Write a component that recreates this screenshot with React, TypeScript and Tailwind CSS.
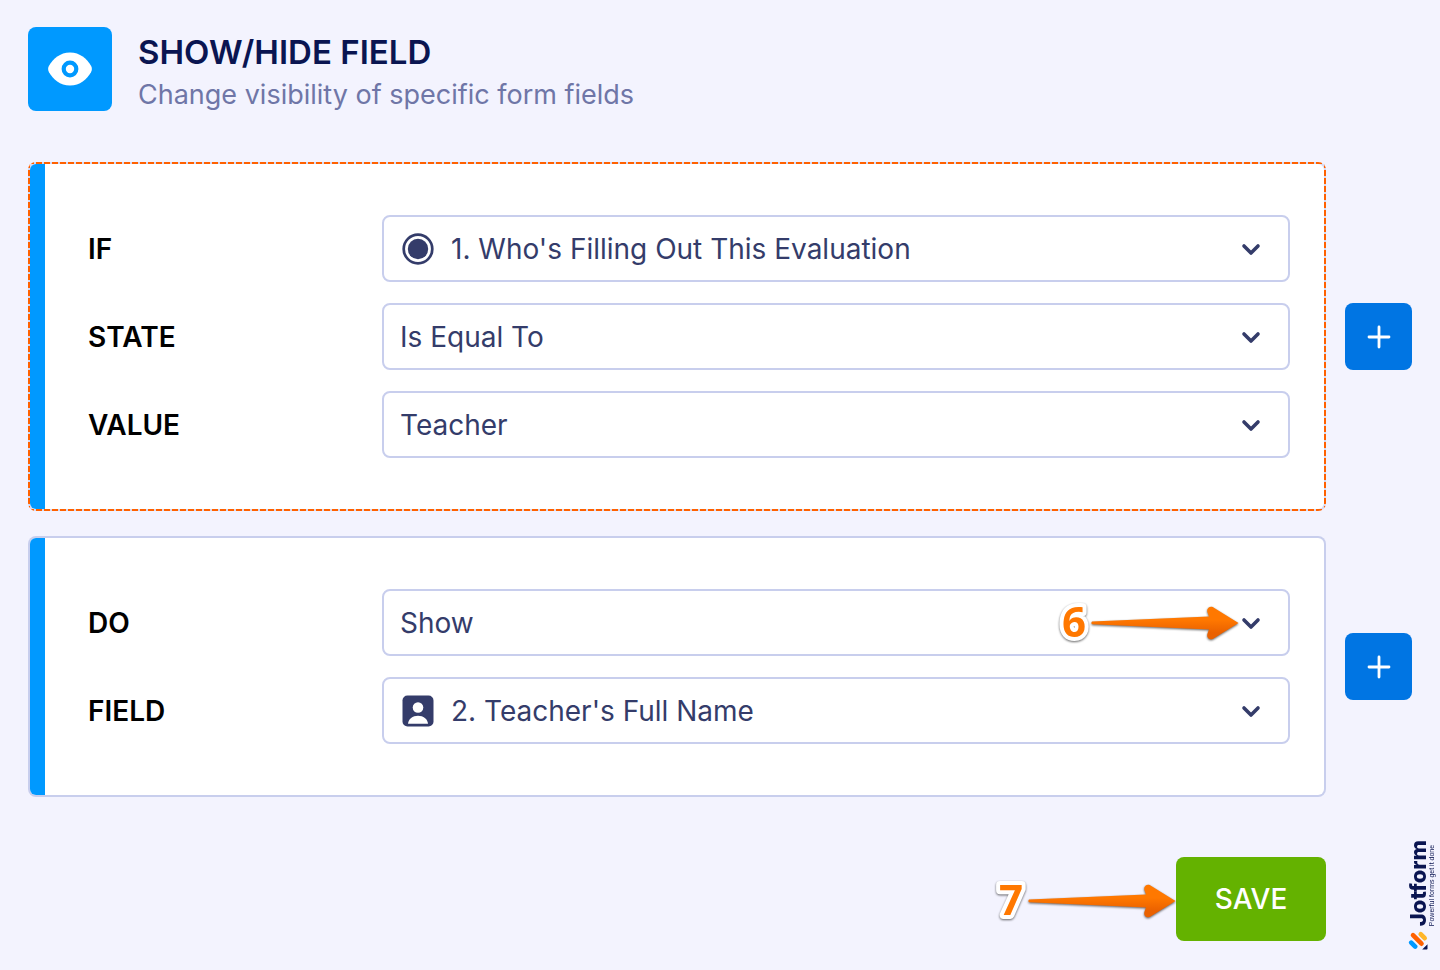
import React from "react";

interface FieldRowProps {
	id: string;
	label: string;
	value: string;
	icon?: React.ReactNode;
	children?: React.ReactNode;
}

interface StepArrowProps {
	step: number;
}

const EyeIcon = () => (
	<svg className="w-11 h-9" viewBox="0 0 44 36" aria-hidden="true">
		<path
			d="M22 1.500C12 1.500 5 8 1 14.800c-1.200 2.100-1.200 4.300 0 6.400C5 28 12 34.500 22 34.500s17-6.500 21-13.300c1.200-2.100 1.200-4.300 0-6.400C39 8 32 1.500 22 1.500Z"
			fill="#fff"
		/>
		<circle cx="22" cy="18" r="6.300" fill="#fff" stroke="#09f" strokeWidth="4.200" />
	</svg>
);

const RadioIcon = () => (
	<svg className="w-8 h-8" viewBox="0 0 32 32" aria-hidden="true">
		<circle cx="16" cy="16" r="14.300" fill="none" stroke="#343c6a" strokeWidth="2.700" />
		<circle cx="16" cy="16" r="10.200" fill="#343c6a" />
	</svg>
);

const PersonIcon = () => (
	<svg className="w-8 h-8" viewBox="0 0 32 32" aria-hidden="true">
		<rect x="0.500" y="0.500" width="31" height="31" rx="5" fill="#343c6a" />
		<circle cx="16" cy="12.500" r="5.300" fill="#fff" />
		<path d="M6 28.700c.5-4.800 4.600-7.900 10-7.900s9.500 3.100 10 7.900Z" fill="#fff" />
	</svg>
);

const ChevronIcon = () => (
	<svg
		className="pointer-events-none absolute right-[27px] top-1/2 -translate-y-1/2 w-6 h-6"
		viewBox="0 0 24 24"
		fill="none"
		stroke="#343c6a"
		strokeWidth="3.600"
		strokeLinecap="round"
		strokeLinejoin="round"
		aria-hidden="true"
	>
		<path d="M5 9l7 7 7-7" />
	</svg>
);

const StepArrow: React.FC<StepArrowProps> = ({ step }) => (
	<svg className="block w-[184px] h-16 drop-shadow-[0_1px_1px_rgba(0,0,0,0.6)]" viewBox="0 0 184 64">
		<defs>
			<linearGradient id={`arrow-${step}`} x1="0" y1="0" x2="0" y2="1">
				<stop offset="0.400" stopColor="#ff7800" />
				<stop offset="0.800" stopColor="#ea6100" />
			</linearGradient>
		</defs>
		<text
			x="7"
			y="46"
			className="font-['Open_Sans',sans-serif] text-[42px] font-bold"
			fill="#ff7800"
			stroke="#fff"
			strokeWidth="8"
			strokeLinejoin="round"
			paintOrder="stroke"
		>
			{step}
		</text>
		<path
			transform="translate(36 14)"
			d="M1 16.500 118 11.500l-1.300-3.500c-1.700-4 1.300-7.500 5-6L147.500 18l-25.800 16c-3.700 1.500-6.700-2-5-6l1.300-3.500L1 19.300Q-.5 18 1 16.500Z"
			fill={`url(#arrow-${step})`}
		/>
	</svg>
);

const FieldRow: React.FC<FieldRowProps> = ({ id, label, value, icon, children }) => (
	<div className="flex items-center">
		<label htmlFor={id} className="w-[294px] shrink-0 text-[28px] leading-9 font-semibold text-black">
			{label}
		</label>
		<div className="relative flex-1 min-w-0">
			{icon && (
				<span className="pointer-events-none absolute left-5 top-1/2 -translate-y-1/2">{icon}</span>
			)}
			<select
				id={id}
				defaultValue={value}
				className={`block w-full h-[67px] appearance-none rounded-lg border-2 border-[#c8ceed] bg-white pr-16 text-[28px] leading-9 text-[#343c6a] ${
					icon ? "pl-[67px]" : "pl-4"
				}`}
			>
				<option>{value}</option>
			</select>
			<ChevronIcon />
			{children}
		</div>
	</div>
);

const AddButton = ({ label }: { label: string }) => (
	<button
		type="button"
		aria-label={label}
		className="flex h-[67px] w-[67px] shrink-0 items-center justify-center rounded-lg bg-[#0075e3]"
	>
		<svg className="w-6 h-6" viewBox="0 0 24 24" stroke="#fff" strokeWidth="2.800" strokeLinecap="round" aria-hidden="true">
			<path d="M12 2v20M2 12h20" />
		</svg>
	</button>
);

// The selected card gets an orange dashed frame, the others a plain one
const RuleCard = ({ active = false, children }: { active?: boolean; children: React.ReactNode }) => (
	<div
		className={`flex-1 min-w-0 rounded-lg p-[2px] ${
			active
				? "bg-[#d5d9f2] [background-image:linear-gradient(90deg,#ff6100_75%,transparent_0),linear-gradient(90deg,#ff6100_75%,transparent_0),linear-gradient(#ff6100_75%,transparent_0),linear-gradient(#ff6100_75%,transparent_0)] [background-size:8px_2px,8px_2px,2px_8px,2px_8px] [background-position:left_top,left_bottom,left_top,right_top] [background-repeat:repeat-x,repeat-x,repeat-y,repeat-y]"
				: "bg-[#c8ceed]"
		}`}
	>
		<div className="flex overflow-hidden rounded-md bg-white">
			<div className="w-[15px] shrink-0 bg-[#0099ff]" />
			<div className="flex flex-1 min-w-0 flex-col gap-[21px] py-[51px] pl-[43px] pr-[34px]">{children}</div>
		</div>
	</div>
);

const JotformMark = () => (
	<div className="absolute bottom-5 right-1 flex rotate-180 items-start gap-1 [writing-mode:vertical-rl]">
		<svg className="h-5 w-5 rotate-180" viewBox="0 0 20 20" fill="none" strokeLinecap="round" strokeWidth="4.600" aria-hidden="true">
			<path d="M5 5l8.500 8.500" stroke="#ff6100" />
			<path d="M3.200 12.400l4 4" stroke="#0099ff" />
			<path d="M12.700 4l4 4" stroke="#ffb629" />
			<path d="M19.500 14v4.500a.8.8 0 0 1-.8.800h-4.500Z" fill="#0a1551" />
		</svg>
		<div className="text-[#0a1551]">
			<p className="text-[22px] leading-[20px] font-extrabold">Jotform</p>
			<p className="font-['Liberation_Sans',sans-serif] text-[7px] leading-[8px]">Powerful forms get it done</p>
		</div>
	</div>
);

const App: React.FC = () => {
	return (
		<div className="relative min-h-screen bg-[#f3f3fe] px-7 pt-[27px] pb-7 font-['Inter',sans-serif]">
			<header className="flex items-start gap-[26px]">
				<div className="flex h-[84px] w-[84px] shrink-0 items-center justify-center rounded-lg bg-[#0099ff]">
					<EyeIcon />
				</div>
				<div>
					<h1 className="text-[33px] leading-[50px] font-semibold text-[#0a1551]">SHOW/HIDE FIELD</h1>
					<p className="text-[27px] leading-9 text-[#6f76a7]">Change visibility of specific form fields</p>
				</div>
			</header>

			<main className="mt-[49px]">
				<section className="flex items-center gap-[19px]">
					<RuleCard active>
						<FieldRow id="if" label="IF" value="1. Who's Filling Out This Evaluation" icon={<RadioIcon />} />
						<FieldRow id="state" label="STATE" value="Is Equal To" />
						<FieldRow id="value" label="VALUE" value="Teacher" />
					</RuleCard>
					<AddButton label="Add condition" />
				</section>

				<section className="mt-[25px] flex items-center gap-[19px]">
					<RuleCard>
						<FieldRow id="do" label="DO" value="Show">
							<div className="pointer-events-none absolute right-[51px] top-1/2 -translate-y-1/2">
								<StepArrow step={6} />
							</div>
						</FieldRow>
						<FieldRow id="field" label="FIELD" value="2. Teacher's Full Name" icon={<PersonIcon />} />
					</RuleCard>
					<AddButton label="Add action" />
				</section>

				<div className="mt-[60px] mr-[86px] flex items-center justify-end">
					<div className="pt-1">
						<StepArrow step={7} />
					</div>
					<button type="button" className="h-[84px] w-[150px] rounded-lg bg-[#64b200] text-[28px] font-medium text-white">
						SAVE
					</button>
				</div>
			</main>

			<JotformMark />
		</div>
	);
};

export default App;
